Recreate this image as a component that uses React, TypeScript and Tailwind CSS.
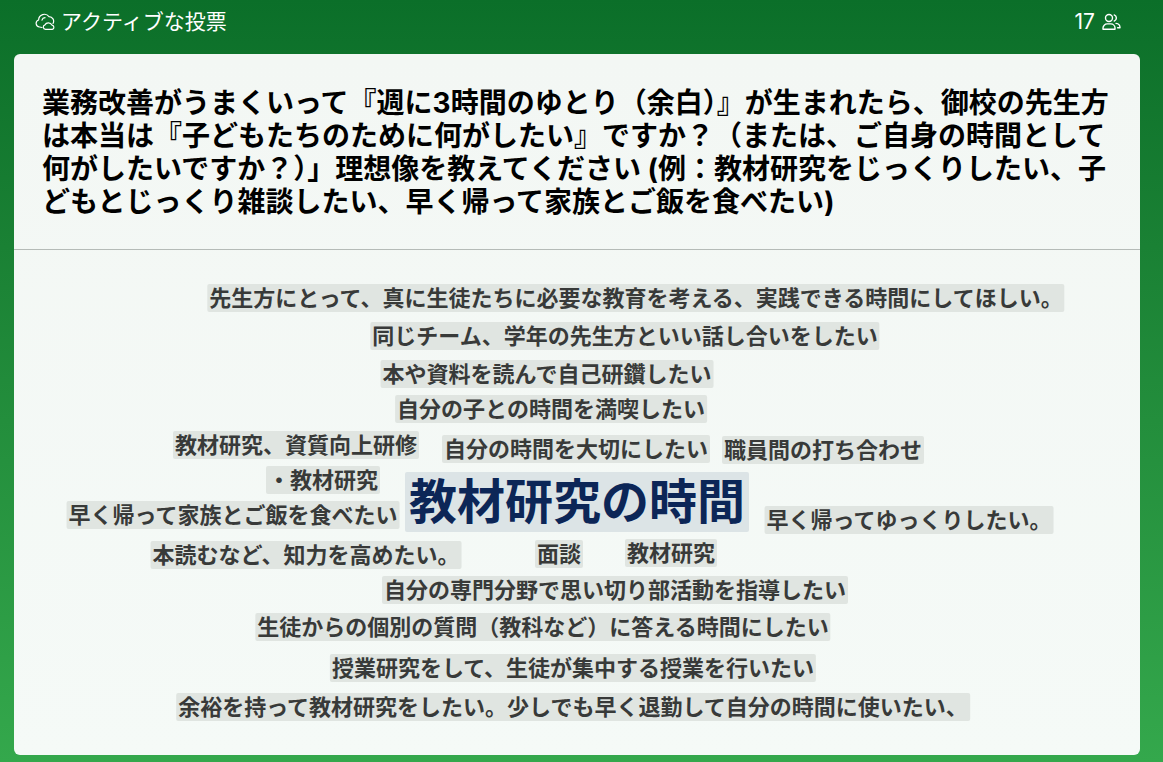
type Word = { text: string; x: number; y: number; top?: boolean };

const words: Word[] = [
  { text: "先生方にとって、真に生徒たちに必要な教育を考える、実践できる時間にしてほしい。", x: 59, y: 48 },
  { text: "同じチーム、学年の先生方といい話し合いをしたい", x: 48, y: 86 },
  { text: "本や資料を読んで自己研鑽したい", x: -30, y: 124 },
  { text: "自分の子との時間を満喫したい", x: -26, y: 159 },
  { text: "教材研究、資質向上研修", x: -281, y: 195 },
  { text: "自分の時間を大切にしたい", x: -1, y: 199 },
  { text: "職員間の打ち合わせ", x: 246, y: 200 },
  { text: "・教材研究", x: -254, y: 230 },
  { text: "教材研究の時間", x: 0, y: 252, top: true },
  { text: "早く帰って家族とご飯を食べたい", x: -344, y: 265 },
  { text: "早く帰ってゆっくりしたい。", x: 332, y: 270 },
  { text: "本読むなど、知力を高めたい。", x: -271, y: 305 },
  { text: "面談", x: -18, y: 304 },
  { text: "教材研究", x: 94, y: 303 },
  { text: "自分の専門分野で思い切り部活動を指導したい", x: 38, y: 340 },
  { text: "生徒からの個別の質問（教科など）に答える時間にしたい", x: -34, y: 377 },
  { text: "授業研究をして、生徒が集中する授業を行いたい", x: -4, y: 418 },
  { text: "余裕を持って教材研究をしたい。少しでも早く退勤して自分の時間に使いたい、", x: -4, y: 457 },
];

function CloudIcon() {
  return (
    <svg viewBox="0 0 20 18" className="h-[18px] w-5" fill="none" stroke="currentColor" strokeWidth="1.2" strokeLinecap="round" strokeLinejoin="round" aria-hidden="true">
      <path d="M7 14.500 4.500 14A3.600 3.600 0 0 1 3.600 7 5.800 5.800 0 0 1 14 3.600 4.600 4.600 0 0 1 18 10.500" />
      <path d="M10.500 16.400a2.300 2.300 0 0 1-.6-4.500 3.900 3.900 0 0 1 7 .2 2.200 2.200 0 0 1 .4 4.300z" />
      <path d="M7 7.200a3.300 3.300 0 0 1 3-2.500" />
    </svg>
  );
}

function PeopleIcon() {
  return (
    <svg viewBox="0 0 20 18" className="h-[18px] w-5" fill="none" stroke="currentColor" strokeWidth="1.4" strokeLinecap="round" strokeLinejoin="round" aria-hidden="true">
      <circle cx="8" cy="5" r="3.500" />
      <path d="M2 16.300v-1.200a4.200 4.200 0 0 1 4.200-4.200h3.600a4.200 4.200 0 0 1 4.200 4.200v1.200z" />
      <path d="M13.200 1.900a3.300 3.300 0 0 1 0 6.200" />
      <path d="M15 10.400a4.300 4.300 0 0 1 4 4.300h-2.400" />
    </svg>
  );
}

export default function App() {
  return (
    <div className="flex min-h-screen flex-col bg-linear-to-b from-[#0b6f29] to-[#34a84c] pr-[23px] pb-[7px] pl-3.5 font-[Inter,'Noto_Sans_CJK_JP',sans-serif]">
      <header className="flex h-[54px] items-start justify-between pt-[7px] pr-[19px] pl-[21px] text-[21px] leading-[30px] text-white">
        <div className="flex items-center gap-1.5">
          <CloudIcon />
          <span>アクティブな投票</span>
        </div>
        <div className="flex items-center gap-1.5">
          <span>17</span>
          <PeopleIcon />
        </div>
      </header>
      <main className="flex grow flex-col rounded-md bg-linear-to-b from-[#f3f7f4] to-[#f5faf7]">
        <h1 className="border-b border-[#b5bbb7] pt-[33px] pr-4 pb-[30px] pl-7 text-[28px] leading-[33px] font-bold text-black">
          業務改善がうまくいって『週に3時間のゆとり（余白）』が生まれたら、御校の先生方は本当は『子どもたちのために何がしたい』ですか？（または、ご自身の時間として何がしたいですか？）」理想像を教えてください (例：教材研究をじっくりしたい、子どもとじっくり雑談したい、早く帰って家族とご飯を食べたい)
        </h1>
        <ul className="relative min-h-[505px] grow">
          {words.map((w) => (
            <li
              key={w.text}
              className={
                w.top
                  ? "absolute -translate-x-1/2 -translate-y-1/2 rounded-xs bg-[#dce4e6] px-1 text-[48px] leading-[60px] font-semibold whitespace-nowrap text-[#0c2657]"
                  : "absolute -translate-x-1/2 -translate-y-1/2 rounded-xs bg-[#e0e5e1] px-0.5 text-[22px] leading-7 font-semibold whitespace-nowrap text-[#383a39]"
              }
              style={{ left: `calc(50% + ${w.x}px)`, top: `${w.y}px` }}
            >
              {w.text}
            </li>
          ))}
        </ul>
      </main>
    </div>
  );
}
